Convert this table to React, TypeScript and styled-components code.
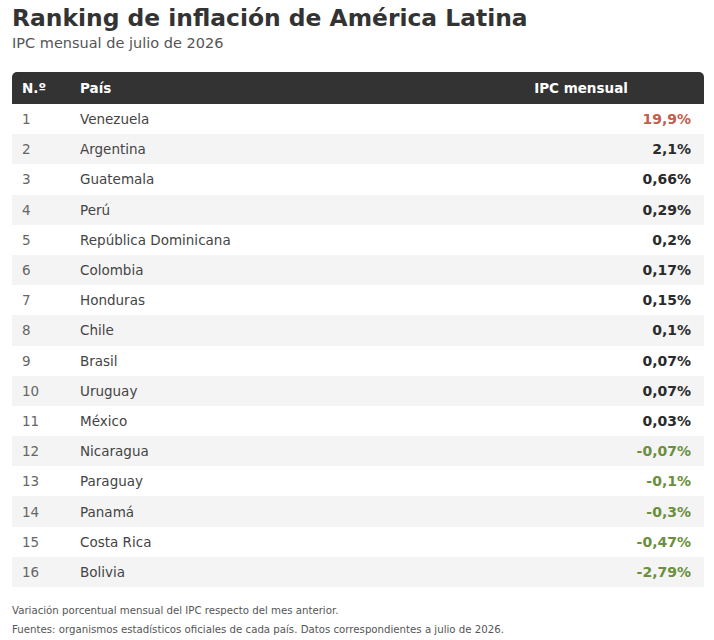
import { FC } from 'react'
import styled, { createGlobalStyle } from 'styled-components'

const GlobalStyle = createGlobalStyle`
  body {
    margin: 0;
    background: #fff;
    font-family: 'DejaVu Sans', Verdana, sans-serif;
    color: #333;
  }
`

type Row = { country: string; value: string; tone: 'up' | 'flat' | 'down' }

const ROWS: Row[] = [
  { country: 'Venezuela', value: '19,9%', tone: 'up' },
  { country: 'Argentina', value: '2,1%', tone: 'flat' },
  { country: 'Guatemala', value: '0,66%', tone: 'flat' },
  { country: 'Perú', value: '0,29%', tone: 'flat' },
  { country: 'República Dominicana', value: '0,2%', tone: 'flat' },
  { country: 'Colombia', value: '0,17%', tone: 'flat' },
  { country: 'Honduras', value: '0,15%', tone: 'flat' },
  { country: 'Chile', value: '0,1%', tone: 'flat' },
  { country: 'Brasil', value: '0,07%', tone: 'flat' },
  { country: 'Uruguay', value: '0,07%', tone: 'flat' },
  { country: 'México', value: '0,03%', tone: 'flat' },
  { country: 'Nicaragua', value: '-0,07%', tone: 'down' },
  { country: 'Paraguay', value: '-0,1%', tone: 'down' },
  { country: 'Panamá', value: '-0,3%', tone: 'down' },
  { country: 'Costa Rica', value: '-0,47%', tone: 'down' },
  { country: 'Bolivia', value: '-2,79%', tone: 'down' },
]

const TONE_COLOR: Record<Row['tone'], string> = {
  up: '#c0604c',
  flat: '#2b2b2b',
  down: '#6b8f3c',
}

export default function App() {
  return (
    <Page>
      <GlobalStyle />
      <Title>Ranking de inflación de América Latina</Title>
      <Subtitle>IPC mensual de julio de 2026</Subtitle>
      <RankTable />
      <Notes>
        <p>Variación porcentual mensual del IPC respecto del mes anterior.</p>
        <p>Fuentes: organismos estadísticos oficiales de cada país. Datos correspondientes a julio de 2026.</p>
      </Notes>
    </Page>
  )
}

const RankTable: FC = () => (
  <Table>
    <colgroup>
      <col style={{ width: 58 }} />
      <col />
      <col style={{ width: 246 }} />
    </colgroup>
    <thead>
      <tr>
        <Th>N.º</Th>
        <Th>País</Th>
        <Th $center>IPC mensual</Th>
      </tr>
    </thead>
    <tbody>
      {ROWS.map((row, i) => (
        <Tr key={row.country}>
          <Rank>{i + 1}</Rank>
          <Td>{row.country}</Td>
          <Value $tone={row.tone}>{row.value}</Value>
        </Tr>
      ))}
    </tbody>
  </Table>
)

// Styles

const Page = styled.div`
  padding: 4px 10px 0 12px;
`

const Title = styled.h1`
  margin: 0;
  font-size: 23.4px;
  font-weight: bold;
  line-height: 28px;
  color: #333;
`

const Subtitle = styled.div`
  margin-top: 2px;
  font-size: 14.5px;
  line-height: 18px;
  color: #555;
`

const Table = styled.table`
  width: 692px;
  margin-top: 20px;
  border-collapse: separate;
  border-spacing: 0;
  table-layout: fixed;
  font-size: 13.5px;
`

const Th = styled.th<{ $center?: boolean }>`
  height: 32px;
  padding: 0 10px;
  background: #333;
  color: #fff;
  font-size: 13.5px;
  font-weight: bold;
  text-align: ${p => (p.$center ? 'center' : 'left')};

  &:first-child {
    border-top-left-radius: 5px;
  }
  &:last-child {
    border-top-right-radius: 5px;
  }
`

const Tr = styled.tr`
  &:nth-child(even) td {
    background: #f4f4f4;
  }
`

const Td = styled.td`
  height: 30.2px;
  padding: 0 10px;
  color: #444;
  box-sizing: border-box;
`

const Rank = styled(Td)`
  color: #666;
`

const Value = styled(Td)<{ $tone: Row['tone'] }>`
  padding-right: 13px;
  text-align: right;
  font-weight: bold;
  font-size: 14px;
  color: ${p => TONE_COLOR[p.$tone]};
`

const Notes = styled.div`
  margin-top: 18px;
  font-size: 10.2px;
  color: #555;

  p {
    margin: 0 0 7px;
    line-height: 12px;
  }
`
